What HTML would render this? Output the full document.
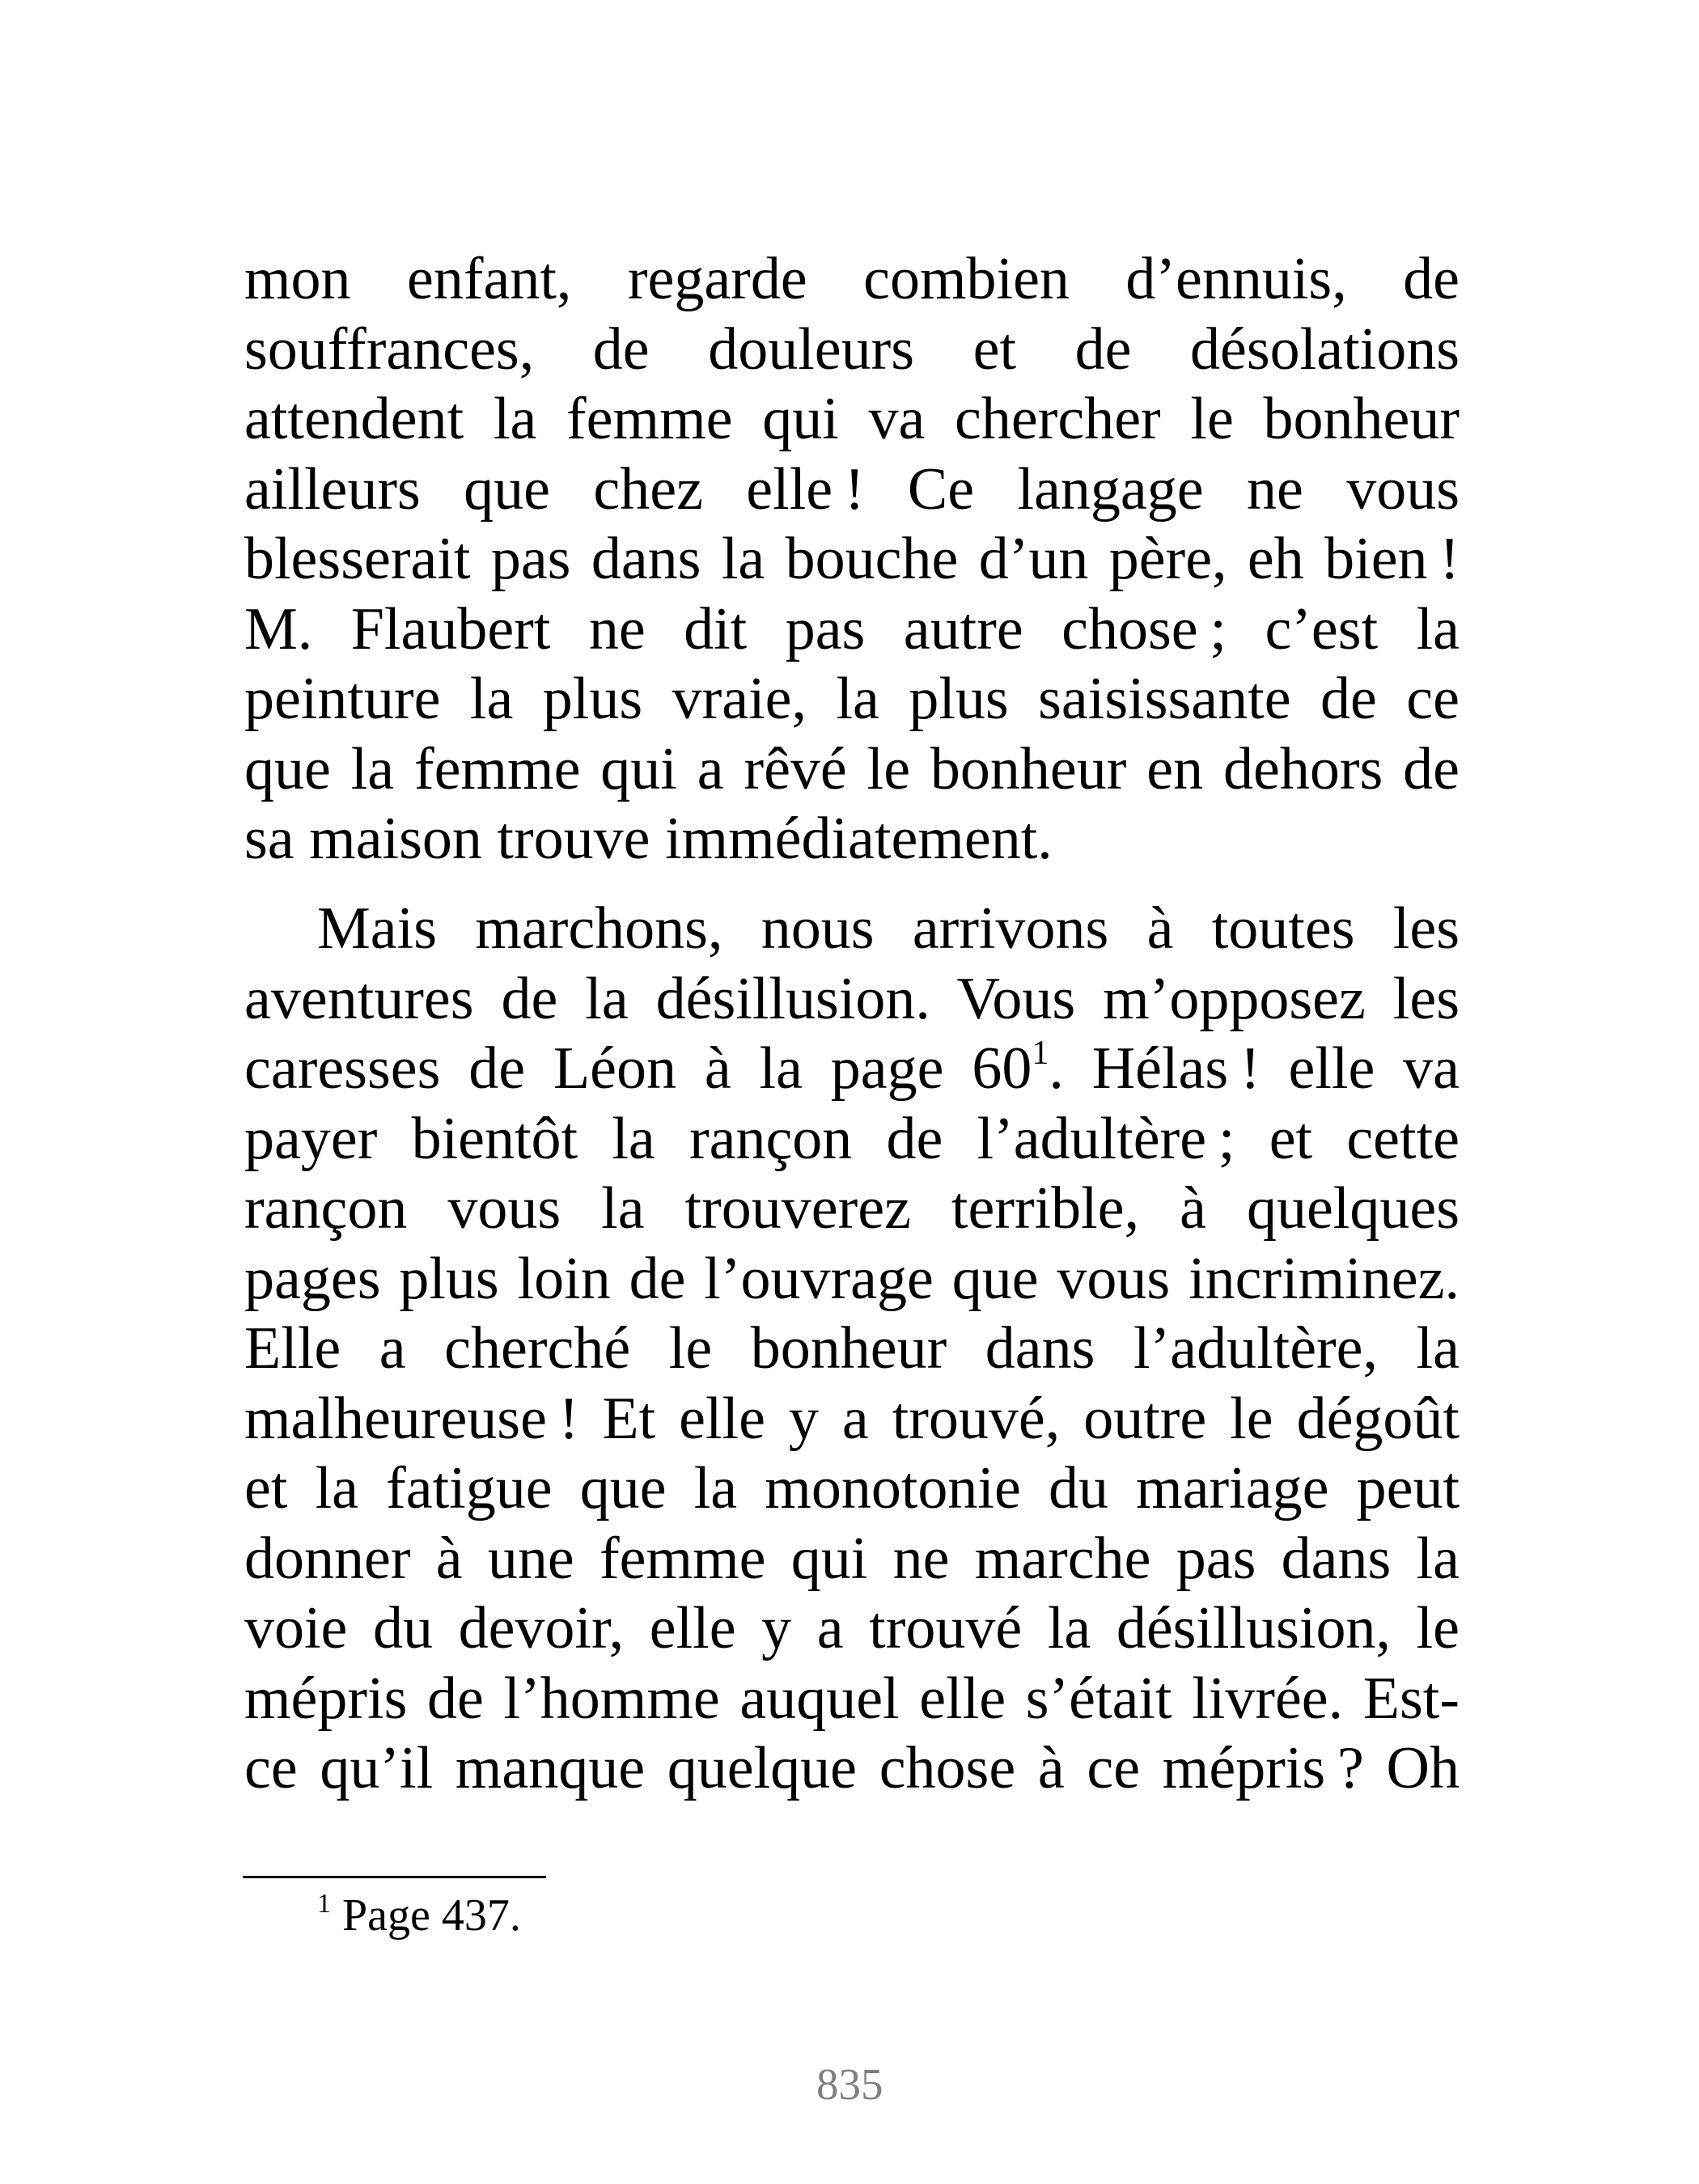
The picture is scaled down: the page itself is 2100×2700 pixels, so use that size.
<!DOCTYPE html>
<html><head><meta charset="utf-8">
<style>
html,body{margin:0;padding:0;background:#fff;}
body{width:2100px;height:2700px;position:relative;overflow:hidden;font-family:"Liberation Serif",serif;color:#000;}
.p{position:absolute;left:302px;width:1502px;font-size:74px;line-height:86.5px;}
.l{text-align:justify;text-align-last:justify;white-space:nowrap;}
.l.last{text-align-last:left;}
.ind{padding-left:90px;}
sup{font-size:42px;line-height:0;vertical-align:0;position:relative;top:-30px;}
.rule{position:absolute;left:300px;top:2319px;width:375px;height:3px;background:#000;}
.fn{position:absolute;left:392px;top:2340px;font-size:56px;line-height:56px;white-space:nowrap;}
.fn sup{font-size:34px;top:-22px;}
.pn{position:absolute;left:1009px;top:2549px;font-size:55px;line-height:55px;color:#808080;}
</style></head><body>
<div class="p" style="top:302px">
<div class="l">mon enfant, regarde combien d’ennuis, de</div>
<div class="l">souffrances, de douleurs et de désolations</div>
<div class="l">attendent la femme qui va chercher le bonheur</div>
<div class="l">ailleurs que chez elle&#8239;! Ce langage ne vous</div>
<div class="l">blesserait pas dans la bouche d’un père, eh bien&#8239;!</div>
<div class="l">M. Flaubert ne dit pas autre chose&#8239;; c’est la</div>
<div class="l">peinture la plus vraie, la plus saisissante de ce</div>
<div class="l">que la femme qui a rêvé le bonheur en dehors de</div>
<div class="l last">sa maison trouve immédiatement.</div>
</div>
<div class="p" style="top:1105px">
<div class="l ind">Mais marchons, nous arrivons à toutes les</div>
<div class="l">aventures de la désillusion. Vous m’opposez les</div>
<div class="l">caresses de Léon à la page 60<sup>1</sup>. Hélas&#8239;! elle va</div>
<div class="l">payer bientôt la rançon de l’adultère&#8239;; et cette</div>
<div class="l">rançon vous la trouverez terrible, à quelques</div>
<div class="l">pages plus loin de l’ouvrage que vous incriminez.</div>
<div class="l">Elle a cherché le bonheur dans l’adultère, la</div>
<div class="l">malheureuse&#8239;! Et elle y a trouvé, outre le dégoût</div>
<div class="l">et la fatigue que la monotonie du mariage peut</div>
<div class="l">donner à une femme qui ne marche pas dans la</div>
<div class="l">voie du devoir, elle y a trouvé la désillusion, le</div>
<div class="l">mépris de l’homme auquel elle s’était livrée. Est-</div>
<div class="l">ce qu’il manque quelque chose à ce mépris&#8239;? Oh</div>
</div>
<div class="rule"></div>
<div class="fn"><sup>1</sup> Page 437.</div>
<div class="pn">835</div>
</body></html>
